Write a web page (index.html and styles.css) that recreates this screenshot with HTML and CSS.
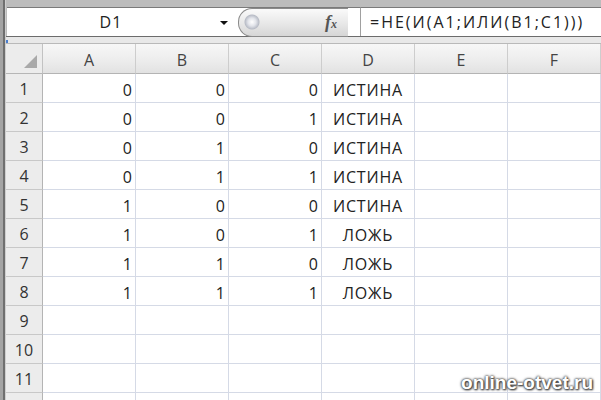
FILE: index.html
```html
<!DOCTYPE html>
<html lang="ru">
<head>
    <meta charset="UTF-8">
    <title>Лист Excel</title>
    <link rel="stylesheet" href="styles.css">
</head>
<body>
    <div class="window">
        <div class="formula-bar">
            <div class="name-box">
                <span class="cell-name">D1</span>
                <span class="drop-arrow"></span>
            </div>
            <div class="fx-zone">
                <span class="knob"></span>
                <span class="fx">f<small>x</small></span>
            </div>
            <div class="formula">=НЕ(И(А1;ИЛИ(В1;С1)))</div>
        </div>
        <div class="bar-gap"><span class="mark"></span></div>

        <div class="sheet">
            <div class="corner"></div>
            <div class="col-head">A</div>
            <div class="col-head">B</div>
            <div class="col-head">C</div>
            <div class="col-head">D</div>
            <div class="col-head">E</div>
            <div class="col-head">F</div>

            <div class="row-head">1</div>
            <div class="cell num">0</div><div class="cell num">0</div><div class="cell num">0</div>
            <div class="cell txt">ИСТИНА</div><div class="cell"></div><div class="cell"></div>

            <div class="row-head">2</div>
            <div class="cell num">0</div><div class="cell num">0</div><div class="cell num">1</div>
            <div class="cell txt">ИСТИНА</div><div class="cell"></div><div class="cell"></div>

            <div class="row-head">3</div>
            <div class="cell num">0</div><div class="cell num">1</div><div class="cell num">0</div>
            <div class="cell txt">ИСТИНА</div><div class="cell"></div><div class="cell"></div>

            <div class="row-head">4</div>
            <div class="cell num">0</div><div class="cell num">1</div><div class="cell num">1</div>
            <div class="cell txt">ИСТИНА</div><div class="cell"></div><div class="cell"></div>

            <div class="row-head">5</div>
            <div class="cell num">1</div><div class="cell num">0</div><div class="cell num">0</div>
            <div class="cell txt">ИСТИНА</div><div class="cell"></div><div class="cell"></div>

            <div class="row-head">6</div>
            <div class="cell num">1</div><div class="cell num">0</div><div class="cell num">1</div>
            <div class="cell txt">ЛОЖЬ</div><div class="cell"></div><div class="cell"></div>

            <div class="row-head">7</div>
            <div class="cell num">1</div><div class="cell num">1</div><div class="cell num">0</div>
            <div class="cell txt">ЛОЖЬ</div><div class="cell"></div><div class="cell"></div>

            <div class="row-head">8</div>
            <div class="cell num">1</div><div class="cell num">1</div><div class="cell num">1</div>
            <div class="cell txt">ЛОЖЬ</div><div class="cell"></div><div class="cell"></div>

            <div class="row-head">9</div>
            <div class="cell"></div><div class="cell"></div><div class="cell"></div>
            <div class="cell"></div><div class="cell"></div><div class="cell"></div>

            <div class="row-head">10</div>
            <div class="cell"></div><div class="cell"></div><div class="cell"></div>
            <div class="cell"></div><div class="cell"></div><div class="cell"></div>

            <div class="row-head">11</div>
            <div class="cell"></div><div class="cell"></div><div class="cell"></div>
            <div class="cell"></div><div class="cell"></div><div class="cell"></div>

            <div class="row-head"></div>
            <div class="cell"></div><div class="cell"></div><div class="cell"></div>
            <div class="cell"></div><div class="cell"></div><div class="cell"></div>
        </div>

        <div class="watermark">online-otvet.ru</div>
    </div>
</body>
</html>
```

FILE: styles.css
```css
* {
    margin: 0;
    padding: 0;
    box-sizing: border-box;
}

body {
    background: #fff;
    font-family: 'Open Sans', 'DejaVu Sans', sans-serif;
    color: #222;
    overflow: hidden;
}

.window {
    position: relative;
    width: 601px;
    height: 400px;
    overflow: hidden;
    padding-left: 6px;
    background: linear-gradient(to right, #a4a4a4 0, #a4a4a4 3px, #6f6f6f 3px, #6f6f6f 5px, #cfcfcf 5px, #cfcfcf 6px);
}

/* строка формул */
.formula-bar {
    display: flex;
    height: 37px;
    padding-top: 7px;
    background: #bcbcbc;
    border-bottom: 1px solid #6c6c6c;
}

.name-box {
    position: relative;
    width: 228px;
    margin-left: 1px;
    background: #fff;
    border-top: 1px solid #7a7a7a;
    display: flex;
    align-items: center;
    justify-content: center;
}

.cell-name {
    font-size: 16px;
    letter-spacing: 1.2px;
    padding-right: 20px;
}

.drop-arrow {
    position: absolute;
    right: 7px;
    top: 13px;
    width: 0;
    height: 0;
    border-left: 4px solid transparent;
    border-right: 4px solid transparent;
    border-top: 4px solid #111;
}

.fx-zone {
    display: flex;
    align-items: center;
    width: 125px;
    background: #fff;
    border-top: 1px solid #7a7a7a;
}

.knob {
    width: 110px;
    height: 29px;
    margin-left: 3px;
    border-radius: 14px 0 0 14px;
    border: 1px solid #8a8a8a;
    border-right: none;
    background:
        radial-gradient(circle at 13px 13px, #fff 0, #e2e4ea 4px, #b8bcc6 7px, rgba(0,0,0,0) 8px),
        linear-gradient(#fafafa, #e9e9e9 50%, #d6d6d6);
}

.fx {
    margin-left: -23px;
    font-family: 'Liberation Serif', serif;
    font-style: italic;
    font-weight: bold;
    font-size: 18px;
    color: #555;
}

.fx small {
    font-size: 12px;
}

.formula {
    flex: 1;
    background: #fff;
    border-top: 1px solid #7a7a7a;
    border-left: 1px solid #a0a0a0;
    padding-left: 9px;
    font-size: 16px;
    letter-spacing: 2px;
    line-height: 28px;
}

.bar-gap {
    position: relative;
    height: 7px;
    background: #e8e8e8;
    border-bottom: 1px solid #b9b9b9;
}

.mark {
    position: absolute;
    left: 0;
    top: 3px;
    width: 2px;
    height: 3px;
    background: #4a7fd0;
}

/* сетка листа */
.sheet {
    display: grid;
    grid-template-columns: 37px repeat(6, 93px);
    grid-template-rows: 30px;
    grid-auto-rows: 29px;
    background: #fff;
}

.corner {
    position: relative;
    background: #ececec;
    border-right: 1px solid #c2c2c2;
    border-bottom: 1px solid #b6b6b6;
}

.corner::after {
    content: "";
    position: absolute;
    right: 5px;
    bottom: 5px;
    width: 0;
    height: 0;
    border-left: 13px solid transparent;
    border-bottom: 13px solid #a9a9a9;
}

.col-head {
    display: flex;
    align-items: center;
    justify-content: center;
    background: linear-gradient(#f7f7f7, #ececec 60%, #e2e2e2);
    border-right: 1px solid #cdcdcd;
    border-bottom: 1px solid #b4b4b4;
    font-size: 16px;
    color: #444;
    padding-top: 2px;
}

.row-head {
    display: flex;
    align-items: center;
    justify-content: center;
    background: #ececec;
    border-right: 1px solid #b4b4b4;
    border-bottom: 1px solid #c8c8c8;
    font-size: 16px;
    color: #333;
    padding-top: 2px;
}

.cell {
    display: flex;
    align-items: center;
    border-right: 1px solid #d5dae6;
    border-bottom: 1px solid #d5dae6;
    font-size: 16px;
    padding-top: 3px;
}

.cell.num {
    justify-content: flex-end;
    padding-right: 3px;
}

.cell.txt {
    justify-content: center;
    letter-spacing: 0.8px;
}

.watermark {
    position: absolute;
    right: 8px;
    bottom: 6px;
    font-family: 'Liberation Sans', Arial, sans-serif;
    font-weight: bold;
    font-size: 19px;
    color: #fff;
    text-shadow: 0 0 3px #444, 0 0 2px #444, 1px 1px 2px #333;
}
```
